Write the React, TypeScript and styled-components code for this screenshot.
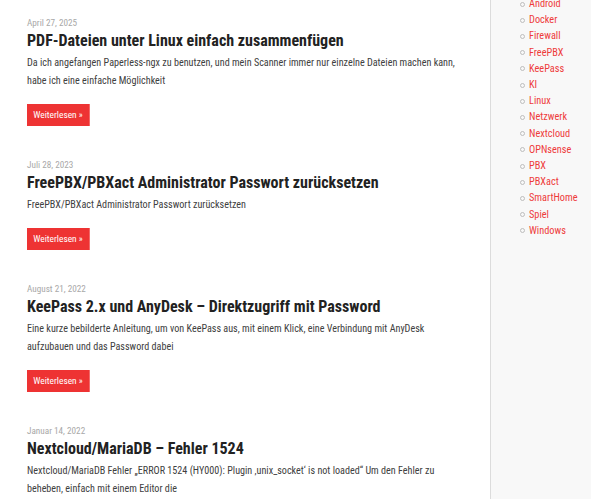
import * as React from "react";
import styled, { createGlobalStyle } from "styled-components";

const GlobalStyle = createGlobalStyle`
    html, body {
        margin: 0;
        padding: 0;
        background: #ffffff;
        overflow: hidden;
    }
`;

const Page = styled.div`
    display: flex;
    width: 591px;
    height: 499px;
    overflow: hidden;
    font-family: "Roboto Condensed", "DejaVu Sans Condensed", sans-serif;
`;

const Main = styled.main`
    width: 490px;
    flex-shrink: 0;
    padding: 17px 25px 0 27px;
    box-sizing: border-box;
    display: flex;
    flex-direction: column;
    gap: 33px;
`;

const Post = styled.article`
    display: flex;
    flex-direction: column;
    align-items: flex-start;
`;

const PostDate = styled.div`
    font-size: 9.2px;
    line-height: 12px;
    color: #a8a8a8;
`;

const Title = styled.h2`
    margin: 0;
    font-weight: bold;
    font-size: 16px;
    line-height: 24px;
    color: #222222;
`;

const Excerpt = styled.p`
    margin: 0;
    padding-top: 1px;
    font-size: 10.15px;
    line-height: 18px;
    color: #404040;
`;

const MoreButton = styled.a`
    margin-top: 14px;
    display: inline-block;
    background: #ee3333;
    color: #ffffff;
    font-size: 9.4px;
    line-height: 22px;
    width: 63px;
    box-sizing: border-box;
    text-align: center;
    border-right: 1px solid #f26a6a;
    text-decoration: none;
`;

const Sidebar = styled.aside`
    flex: 1;
    background: #f8f8f8;
    border-left: 1px solid #dcdcdc;
`;

const TagList = styled.ul`
    margin: -4px 0 0 0;
    padding: 0 0 0 29px;
    list-style: none;
`;

const TagItem = styled.li`
    display: flex;
    align-items: center;
    gap: 4px;
    font-size: 10.3px;
    line-height: 16.2px;
    color: #ee3b3b;

    &::before {
        content: "";
        width: 3px;
        height: 3px;
        border: 1px solid #bdbdbd;
        border-radius: 50%;
    }
`;

type PostData = {
    date: string;
    title: string;
    excerpt: string[];
    more: boolean;
};

const posts: PostData[] = [
    {
        date: "April 27, 2025",
        title: "PDF-Dateien unter Linux einfach zusammenfügen",
        excerpt: [
            "Da ich angefangen Paperless-ngx zu benutzen, und mein Scanner immer nur einzelne Dateien machen kann,",
            "habe ich eine einfache Möglichkeit",
        ],
        more: true,
    },
    {
        date: "Juli 28, 2023",
        title: "FreePBX/PBXact Administrator Passwort zurücksetzen",
        excerpt: ["FreePBX/PBXact Administrator Passwort zurücksetzen"],
        more: true,
    },
    {
        date: "August 21, 2022",
        title: "KeePass 2.x und AnyDesk – Direktzugriff mit Password",
        excerpt: [
            "Eine kurze bebilderte Anleitung, um von KeePass aus, mit einem Klick, eine Verbindung mit AnyDesk",
            "aufzubauen und das Password dabei",
        ],
        more: true,
    },
    {
        date: "Januar 14, 2022",
        title: "Nextcloud/MariaDB – Fehler 1524",
        excerpt: [
            "Nextcloud/MariaDB Fehler „ERROR 1524 (HY000): Plugin ‚unix_socket‘ is not loaded“ Um den Fehler zu",
            "beheben, einfach mit einem Editor die",
        ],
        more: false,
    },
];

const tags = [
    "Android",
    "Docker",
    "Firewall",
    "FreePBX",
    "KeePass",
    "KI",
    "Linux",
    "Netzwerk",
    "Nextcloud",
    "OPNsense",
    "PBX",
    "PBXact",
    "SmartHome",
    "Spiel",
    "Windows",
];

export default function App() {
    return (
        <>
            <GlobalStyle />
            <Page>
                <Main>
                    {posts.map((p) => (
                        <Post key={p.title}>
                            <PostDate>{p.date}</PostDate>
                            <Title>{p.title}</Title>
                            <Excerpt>
                                {p.excerpt.map((line, i) => (
                                    <React.Fragment key={i}>
                                        {i > 0 && <br />}
                                        {line}
                                    </React.Fragment>
                                ))}
                            </Excerpt>
                            {p.more && <MoreButton href="#">Weiterlesen »</MoreButton>}
                        </Post>
                    ))}
                </Main>
                <Sidebar>
                    <TagList>
                        {tags.map((t) => (
                            <TagItem key={t}>{t}</TagItem>
                        ))}
                    </TagList>
                </Sidebar>
            </Page>
        </>
    );
}
